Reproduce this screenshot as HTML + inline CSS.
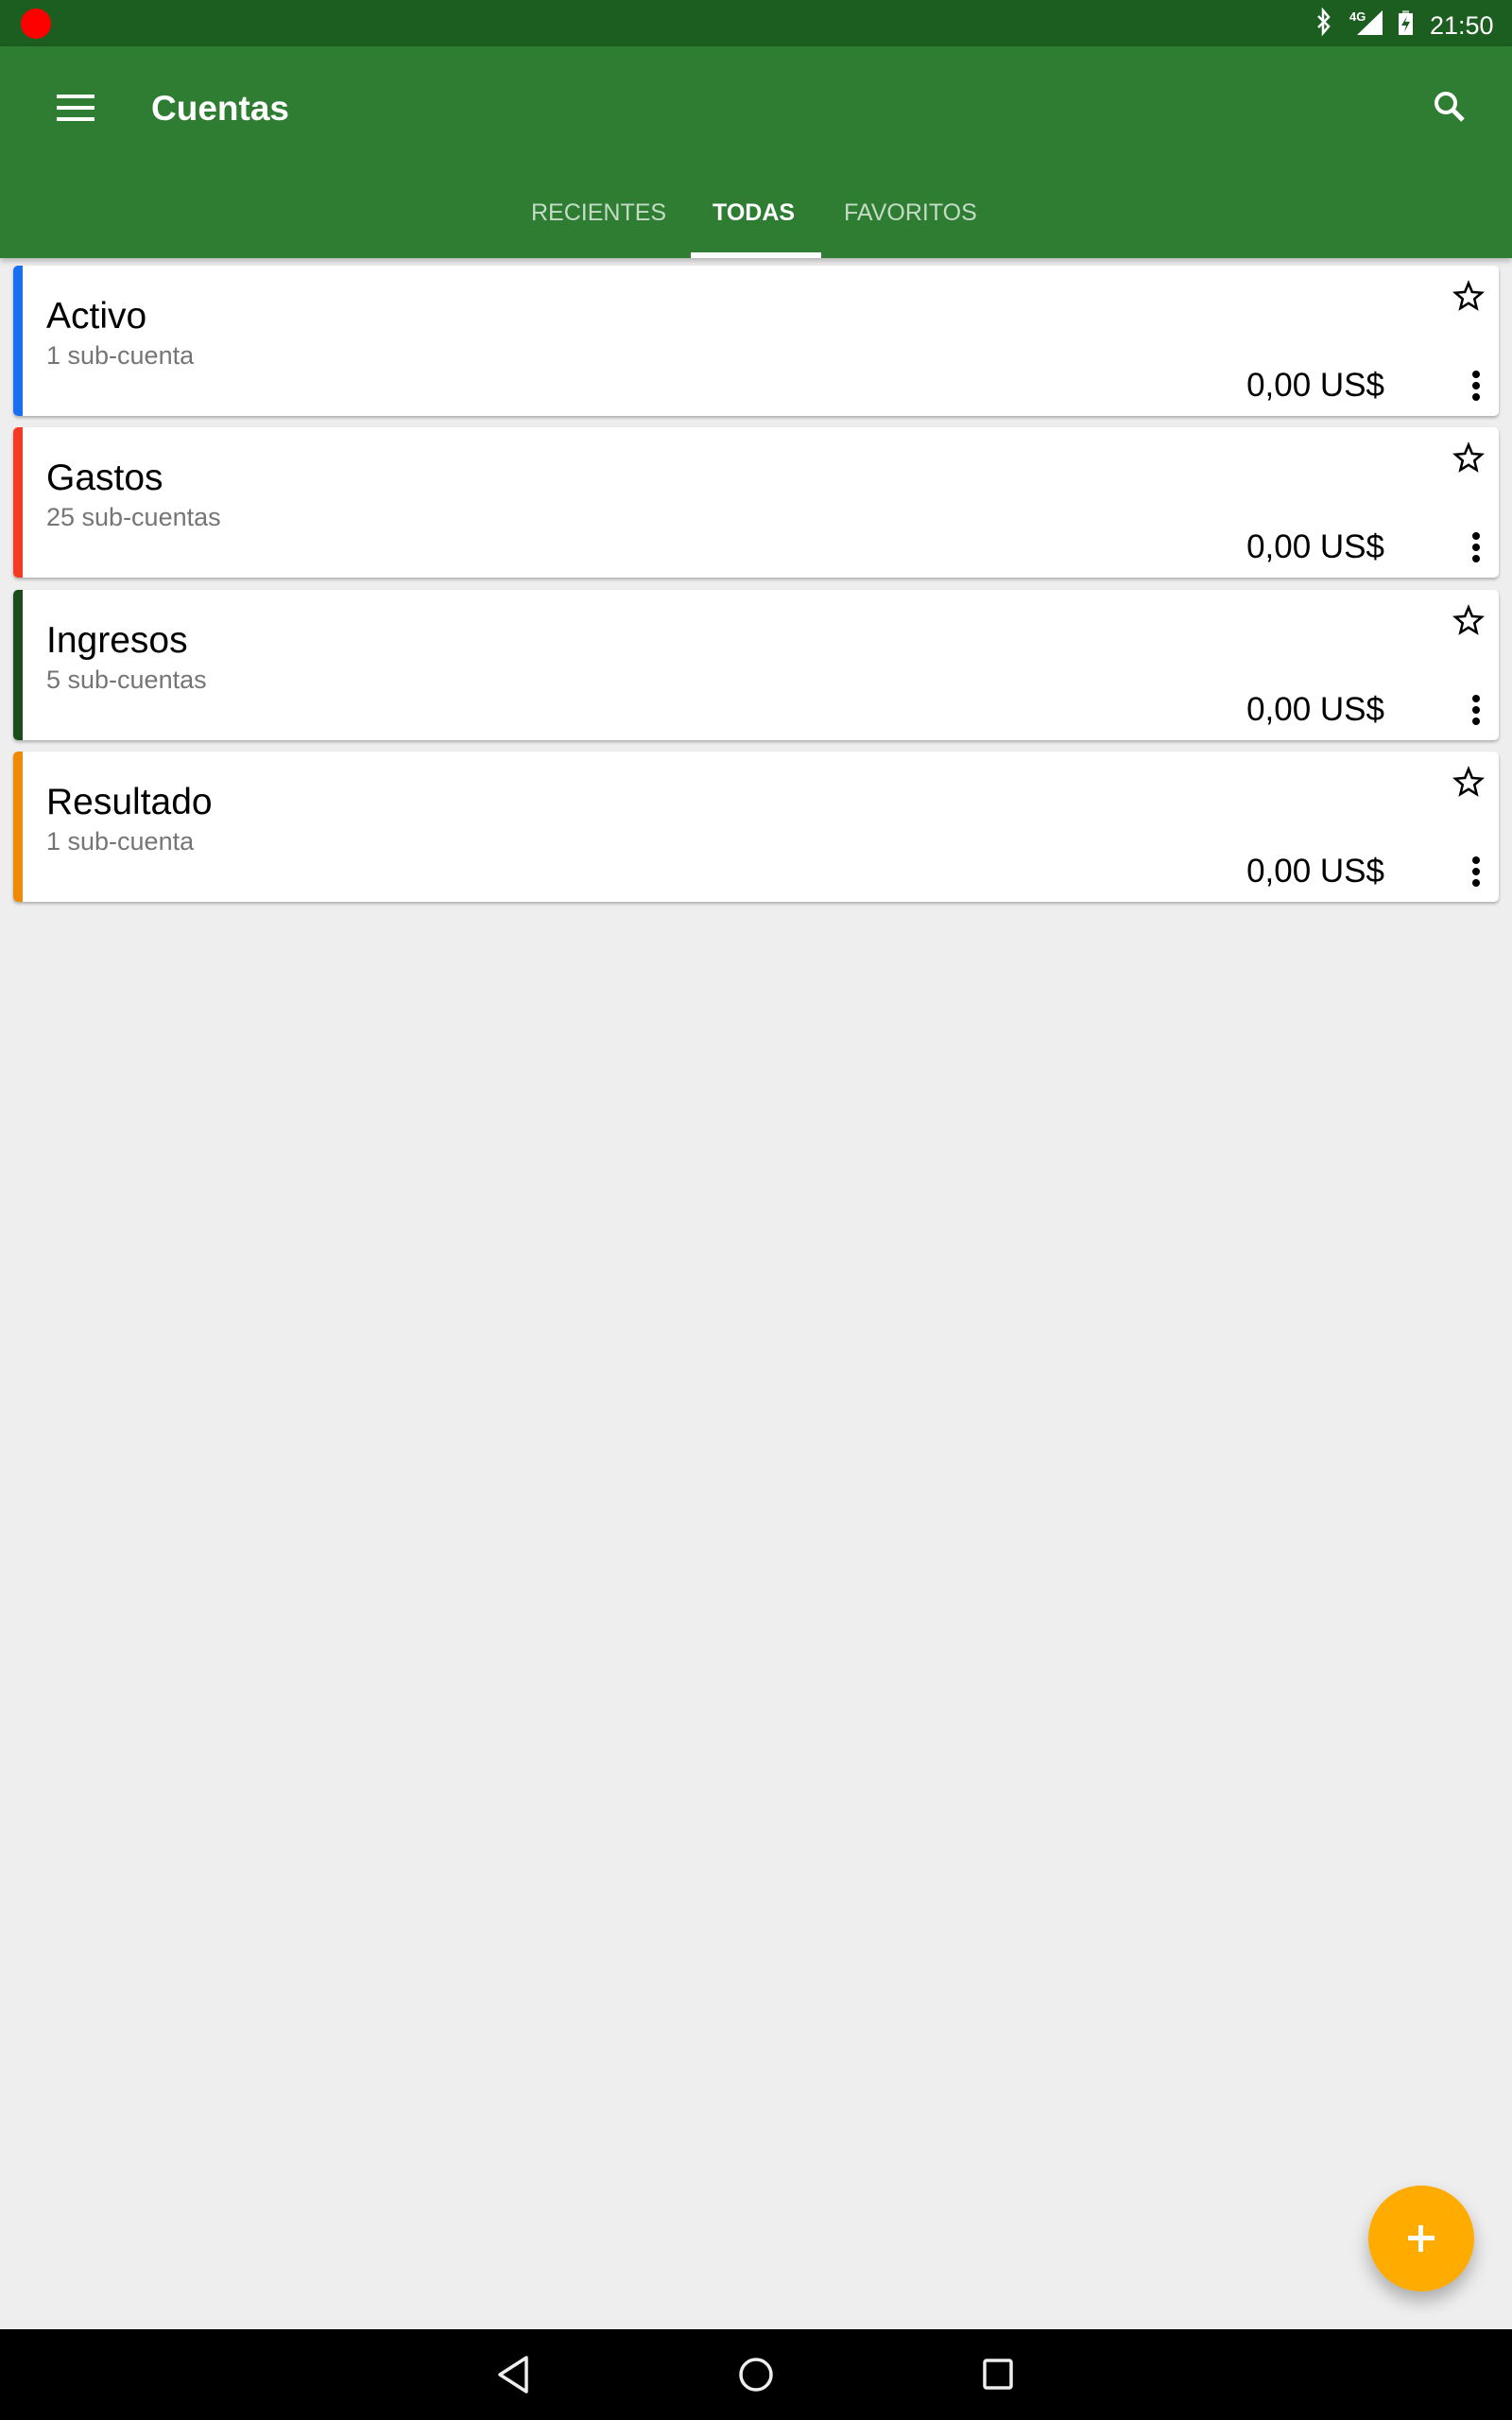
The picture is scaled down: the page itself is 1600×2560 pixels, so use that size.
<!DOCTYPE html>
<html><head><meta charset="utf-8"><style>
*{margin:0;padding:0;box-sizing:border-box}
body{width:1600px;height:2560px;background:#eeeeee;position:relative;overflow:hidden;font-family:"Liberation Sans",sans-serif}
.abs{position:absolute}
.status{left:0;top:0;width:1600px;height:49px;background:#1b5e20}
.bar{left:0;top:49px;width:1600px;height:224px;background:#2e7d32;box-shadow:0 3px 6px rgba(0,0,0,.25)}
.tab{top:211px;font-size:25px;color:rgba(255,255,255,.72);font-weight:500}
.card{left:14px;width:1572px;height:159px;background:#fff;border-radius:5px;box-shadow:0 2px 3px rgba(0,0,0,.28);overflow:hidden}
.card .c{position:absolute;left:0;top:0;width:10px;height:100%}
.card .t{position:absolute;left:35px;top:32px;font-size:39px;color:#000}
.card .s{position:absolute;left:35px;top:80px;font-size:27px;color:#757575}
.card .a{position:absolute;right:121px;top:107px;font-size:35px;color:#000}
.card svg{position:absolute}
</style></head><body>
<div class="abs status"></div>
<div class="abs" style="left:22px;top:9px;width:32px;height:32px;border-radius:50%;background:#f00"></div>
<svg class="abs" style="left:1390px;top:8px" width="200" height="34" viewBox="0 0 200 34">
<path d="M5 9 L16 20 L10 27 L10 3 L16 10 L5 21" fill="none" stroke="#fff" stroke-width="2.5"/>
<text x="38" y="14" font-size="13" font-weight="bold" fill="#fff" font-family="Liberation Sans">4G</text>
<path d="M46 29 L73 3 L73 29 Z" fill="#fff"/>
<rect x="90" y="6" width="15" height="23" fill="#fff"/><rect x="94" y="3" width="7" height="4" fill="#fff" opacity=".6"/>
<path d="M99 9 L93 19 L98 19 L96 26 L102 15 L97 15 Z" fill="#1b5e20"/>
<text x="123" y="28" font-size="27" fill="#fff" font-family="Liberation Sans">21:50</text>
</svg>
<div class="abs bar"></div>
<div class="abs" style="left:60px;top:100px;width:40px;height:4px;background:#fff"></div>
<div class="abs" style="left:60px;top:112px;width:40px;height:4px;background:#fff"></div>
<div class="abs" style="left:60px;top:124px;width:40px;height:4px;background:#fff"></div>
<div class="abs" style="left:160px;top:94px;font-size:37px;color:#fff;font-weight:bold">Cuentas</div>
<svg class="abs" style="left:1515px;top:94px" width="40" height="40" viewBox="0 0 40 40"><circle cx="15" cy="15" r="10" fill="none" stroke="#fff" stroke-width="4"/><path d="M22 22 L33 33" stroke="#fff" stroke-width="5"/></svg>
<div class="abs tab" style="left:562px">RECIENTES</div>
<div class="abs tab" style="left:754px;color:#fff;font-weight:bold">TODAS</div>
<div class="abs tab" style="left:893px">FAVORITOS</div>
<div class="abs" style="left:731px;top:267px;width:138px;height:6px;background:#fff"></div>

<div class="abs card" style="top:281px"><div class="c" style="background:#1a6ef0"></div><div class="t">Activo</div><div class="s">1 sub-cuenta</div><div class="a">0,00 US$</div>
<svg style="left:1523px;top:15px" width="34" height="34" viewBox="0 0 24 24"><path d="M12 2.5l2.7 6.6 7.1.6-5.4 4.6 1.7 7-6.1-3.8-6.1 3.8 1.7-7-5.4-4.6 7.1-.6z" fill="none" stroke="#000" stroke-width="1.8" stroke-linejoin="miter"/></svg>
<svg style="left:1540px;top:110px" width="16" height="36"><circle cx="8" cy="5" r="4"/><circle cx="8" cy="17" r="4"/><circle cx="8" cy="29" r="4"/></svg></div>

<div class="abs card" style="top:452px"><div class="c" style="background:#f43a24"></div><div class="t">Gastos</div><div class="s">25 sub-cuentas</div><div class="a">0,00 US$</div>
<svg style="left:1523px;top:15px" width="34" height="34" viewBox="0 0 24 24"><path d="M12 2.5l2.7 6.6 7.1.6-5.4 4.6 1.7 7-6.1-3.8-6.1 3.8 1.7-7-5.4-4.6 7.1-.6z" fill="none" stroke="#000" stroke-width="1.8"/></svg>
<svg style="left:1540px;top:110px" width="16" height="36"><circle cx="8" cy="5" r="4"/><circle cx="8" cy="17" r="4"/><circle cx="8" cy="29" r="4"/></svg></div>

<div class="abs card" style="top:624px"><div class="c" style="background:#1b4d1a"></div><div class="t">Ingresos</div><div class="s">5 sub-cuentas</div><div class="a">0,00 US$</div>
<svg style="left:1523px;top:15px" width="34" height="34" viewBox="0 0 24 24"><path d="M12 2.5l2.7 6.6 7.1.6-5.4 4.6 1.7 7-6.1-3.8-6.1 3.8 1.7-7-5.4-4.6 7.1-.6z" fill="none" stroke="#000" stroke-width="1.8"/></svg>
<svg style="left:1540px;top:110px" width="16" height="36"><circle cx="8" cy="5" r="4"/><circle cx="8" cy="17" r="4"/><circle cx="8" cy="29" r="4"/></svg></div>

<div class="abs card" style="top:795px"><div class="c" style="background:#ef8a08"></div><div class="t">Resultado</div><div class="s">1 sub-cuenta</div><div class="a">0,00 US$</div>
<svg style="left:1523px;top:15px" width="34" height="34" viewBox="0 0 24 24"><path d="M12 2.5l2.7 6.6 7.1.6-5.4 4.6 1.7 7-6.1-3.8-6.1 3.8 1.7-7-5.4-4.6 7.1-.6z" fill="none" stroke="#000" stroke-width="1.8"/></svg>
<svg style="left:1540px;top:110px" width="16" height="36"><circle cx="8" cy="5" r="4"/><circle cx="8" cy="17" r="4"/><circle cx="8" cy="29" r="4"/></svg></div>

<div class="abs" style="left:1448px;top:2312px;width:112px;height:112px;border-radius:50%;background:#ffab00;box-shadow:0 10px 18px rgba(0,0,0,.28)"></div>
<div class="abs" style="left:1490px;top:2365px;width:28px;height:5px;background:#fff"></div>
<div class="abs" style="left:1501px;top:2354px;width:5px;height:28px;background:#fff"></div>

<div class="abs" style="left:0;top:2464px;width:1600px;height:96px;background:#000"></div>
<svg class="abs" style="left:0;top:2464px" width="1600" height="96">
<path d="M557 30 L529 48 L557 66 Z" fill="none" stroke="#eee" stroke-width="3.5" stroke-linejoin="round"/>
<circle cx="800" cy="48" r="16" fill="none" stroke="#eee" stroke-width="3.5"/>
<rect x="1042" y="33" width="28" height="29" rx="2" fill="none" stroke="#eee" stroke-width="3.5"/>
</svg>
</body></html>
